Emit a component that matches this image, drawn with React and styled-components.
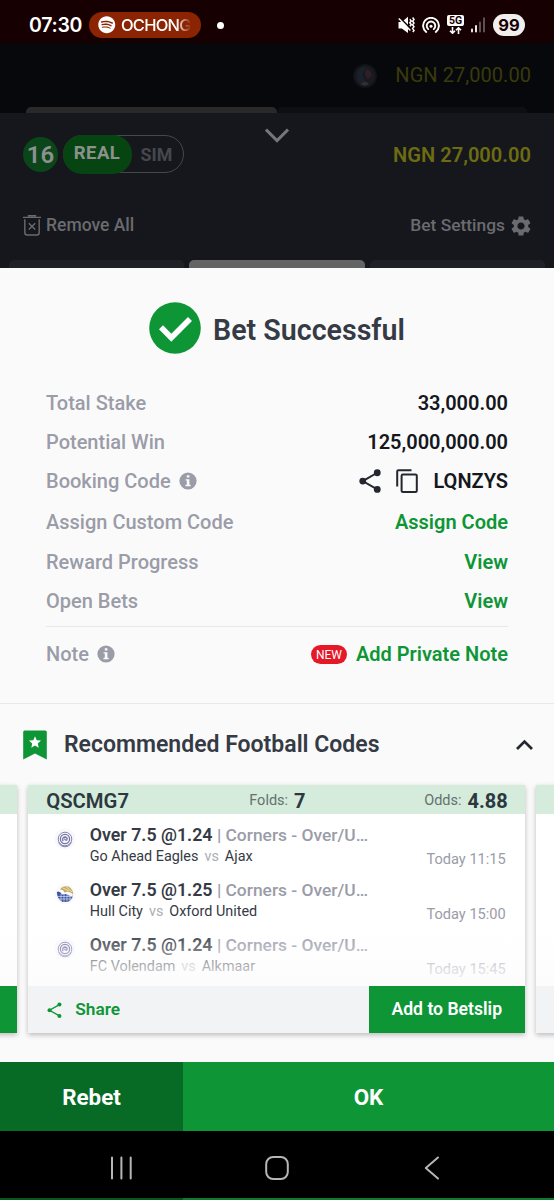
import React from "react";
import styled, { createGlobalStyle } from "styled-components";
import { FaSpotify } from "react-icons/fa";
import { MdSettings } from "react-icons/md";

const GlobalStyle = createGlobalStyle`
  * { box-sizing: border-box; }
  body { margin: 0; background: #000; font-family: Roboto, "Liberation Sans", sans-serif; }
  svg { display: block; flex: none; }
`;

const GREEN = "#0e9636";

const Screen = styled.main`
  width: 554px;
  height: 1200px;
  overflow: hidden;
  display: flex;
  flex-direction: column;
  background: #07080b;
`;

const Text = styled.span`
  display: block;
  white-space: pre;
  font-size: ${(p) => p.$size || 20}px;
  font-weight: ${(p) => p.$weight || 500};
  color: ${(p) => p.$color || "#15171d"};
  letter-spacing: ${(p) => p.$spacing || 0}px;
  line-height: 1.2;
`;

/* Status bar */
const StatusBar = styled.header`
  height: 43px;
  flex: none;
  background: #170001;
  display: flex;
  align-items: center;
  padding: 7px 29px 0 29px;
`;
const Clock = styled(Text)`
  font-family: Inter, Roboto, sans-serif;
  width: 60px;
  padding-top: 2px;
`;
const MediaPill = styled.div`
  display: flex;
  align-items: center;
  gap: 5.5px;
  width: 112px;
  height: 26px;
  padding-left: 9px;
  border-radius: 13px;
  background: #8b2403;
  color: #fff;
`;
const MediaTitle = styled.span`
  width: 73px;
  white-space: nowrap;
  font: 500 16.5px/20px Inter, Roboto, sans-serif;
  letter-spacing: -0.8px;
  mask-image: linear-gradient(to right, #000 76%, transparent 96%);
`;
const Dot = styled.i`
  width: 7px;
  height: 7px;
  margin-left: 16px;
  border-radius: 50%;
  background: #fff;
`;
const StatusIcons = styled.div`
  margin-left: auto;
  display: flex;
  align-items: center;
  gap: 7px;
`;
const Battery = styled.span`
  width: 32px;
  height: 22px;
  margin-left: 1px;
  border-radius: 11px;
  background: #f1eeee;
  color: #170001;
  text-align: center;
  font: 700 16.5px/22px Inter, Roboto, sans-serif;
`;

/* Dimmed page behind the dialog */
const BackPage = styled.section`
  height: 70px;
  flex: none;
  display: flex;
  flex-direction: column;
  justify-content: space-between;
`;
const BackBalance = styled.div`
  display: flex;
  align-items: center;
  justify-content: flex-end;
  gap: 18px;
  height: 64px;
  padding: 1px 23px 0 0;
`;
const BackTabs = styled.div`
  display: flex;
  height: 6px;
  padding: 0 27px 0 26px;
`;
const BackTab = styled.i`
  flex: 1;
  border-radius: 5px 5px 0 0;
  background: ${(p) => (p.$active ? "#29292a" : "#0e0f12")};
`;

const Betslip = styled.section`
  height: 154.5px;
  flex: none;
  display: flex;
  flex-direction: column;
  background: #16171d;
`;
const BetslipTop = styled.div`
  display: grid;
  grid-template-columns: 1fr auto 1fr;
  height: 82px;
  padding: 0 23px;
  align-items: center;
`;
const ModeGroup = styled.div`
  display: flex;
  align-items: center;
  gap: 5px;
`;
const CountBadge = styled.span`
  width: 35px;
  height: 35px;
  border-radius: 50%;
  background: #0a4619;
  color: #8d908f;
  text-align: center;
  font-size: 24px;
  font-weight: 600;
  line-height: 37px;
`;
const Toggle = styled.div`
  display: flex;
  width: 121px;
  height: 38px;
  border: 1.5px solid #46474c;
  border-radius: 19px;
`;
const ToggleOn = styled.span`
  width: 69px;
  margin: -1.5px 0 -1.5px -1.5px;
  border-radius: 19px;
  background: #064511;
  color: #8d918e;
  text-align: center;
  font-size: 18.5px;
  font-weight: 700;
  line-height: 37px;
  letter-spacing: 0.4px;
`;
const ToggleOff = styled.span`
  flex: 1;
  padding-left: 9px;
  color: #46474d;
  font-size: 17.8px;
  font-weight: 700;
  line-height: 38px;
`;
const Balance = styled(Text)`
  padding-top: 3px;
  text-align: right;
`;
const ChevronSlot = styled.div`
  align-self: start;
  padding-top: 15px;
`;
const BetslipActions = styled.div`
  display: flex;
  justify-content: space-between;
  align-items: center;
  height: 61px;
  padding: 0 21px 0 23px;
`;
const IconLabel = styled.div`
  display: flex;
  align-items: center;
  gap: ${(p) => p.$gap}px;
  color: #6a6b6f;
`;
const SlipTabs = styled.div`
  display: flex;
  gap: 5.5px;
  margin-top: auto;
  height: 7.5px;
  padding: 0 8.5px;
`;
const SlipTab = styled.i`
  flex: 1;
  border-radius: 5px 5px 0 0;
  background: ${(p) => (p.$active ? "#646465" : "#202127")};
`;

/* Dialog */
const Dialog = styled.section`
  height: 794px;
  flex: none;
  overflow: hidden;
  display: flex;
  flex-direction: column;
  background: #fafafa;
`;
const DialogTitle = styled.div`
  display: flex;
  align-items: center;
  justify-content: center;
  gap: 12px;
  height: 116px;
  padding-top: 5px;
`;
const Heading = styled(Text)`
  padding-top: 4px;
`;
const Details = styled.div`
  padding: 0 46px;
`;
const DetailRow = styled.div`
  display: flex;
  align-items: center;
  justify-content: space-between;
  height: ${(p) => p.$h}px;
`;
const Inline = styled.div`
  display: flex;
  align-items: center;
  gap: ${(p) => p.$gap}px;
`;
const Rule = styled.hr`
  height: 1.5px;
  margin: ${(p) => p.$top || 0}px 0 0;
  border: 0;
  flex: none;
  background: #e8e8ec;
`;
const NewBadge = styled.span`
  width: 36px;
  height: 19px;
  border-radius: 10px;
  background: #e41827;
  color: #fff;
  text-align: center;
  font-size: 12px;
  line-height: 20px;
`;
const CodesHeader = styled.div`
  display: flex;
  align-items: center;
  height: 81px;
  flex: none;
  padding: 1px 21px 0 23px;
`;
const CodesTitle = styled(Text)`
  flex: 1;
  padding-left: 17px;
`;

/* Carousel */
const Carousel = styled.div`
  display: flex;
  justify-content: center;
  gap: 11.5px;
  padding-right: 1px;
`;
const Card = styled.article`
  display: flex;
  flex-direction: column;
  flex: none;
  width: 496.5px;
  height: 247.5px;
  background: #fff;
  box-shadow: 0 2px 5px rgba(0, 0, 0, 0.25);
`;
const CardHead = styled.div`
  display: grid;
  grid-template-columns: 203px 1fr auto;
  align-items: center;
  height: 28.5px;
  padding: 3px 17px 0 18px;
  background: #d5ebdb;
`;
const CardBody = styled.div`
  position: relative;
  height: 172.5px;
  overflow: hidden;
  padding-top: 10.5px;
`;
const Fade = styled.div`
  position: absolute;
  inset: auto 0 0 0;
  height: 55px;
  background: linear-gradient(to bottom, rgba(253, 253, 253, 0), rgba(252, 252, 252, 0.95));
`;
const Pick = styled.div`
  display: flex;
  height: 55px;
  padding: 0 19px 0 25.5px;
`;
const Crest = styled.div`
  width: 36px;
  padding-top: 3.5px;
`;
const PickInfo = styled.div`
  flex: 1;
`;
const PickLine = styled.div`
  display: flex;
  align-items: center;
  height: 22px;
`;
const Versus = styled(Text)`
  padding: 0 6px;
`;
const PickTime = styled(Text)`
  margin-top: 27px;
`;
const CardFoot = styled.div`
  display: flex;
  height: 46.5px;
  background: #f1f3f4;
`;
const ShareAction = styled.div`
  flex: 1;
  display: flex;
  align-items: center;
  gap: 13px;
  padding: 1px 0 0 19px;
`;
const AddButton = styled.div`
  display: flex;
  align-items: center;
  justify-content: center;
  width: 156px;
  padding-top: 1px;
  background: ${GREEN};
`;

/* Bottom bars */
const Actions = styled.footer`
  display: flex;
  height: 69.5px;
  flex: none;
`;
const ActionButton = styled.div`
  display: flex;
  align-items: center;
  justify-content: center;
  padding-top: 3px;
  width: ${(p) => p.$w}px;
  background: ${(p) => p.$bg};
`;
const NavBar = styled.nav`
  display: flex;
  align-items: center;
  justify-content: space-between;
  height: 67px;
  flex: none;
  padding: 6px 114px 0 110px;
  background: #000;
`;
const Strip = styled.div`
  display: flex;
  flex: 1;
  background: linear-gradient(to right, #07561c 183px, #0f7a2e 183px);
`;

const MuteVibrate = () => (
  <svg width="17" height="18" viewBox="0 0 17 18" fill="none" stroke="#fff">
    <path d="M0.5 6H3.8L10 0.8V17L3.8 12.5H0.5Z" fill="#fff" stroke="none" />
    <path d="M0.7 0.6L13 13.2" stroke="#170001" strokeWidth="1.8" />
    <path d="M0.8 2.4L12.4 14.4" strokeWidth="1.5" />
    <path d="M11.8 3.2L13.3 5L11.8 6.8L13.3 8.6L11.9 10.3M14.6 1.5L16 3.4L14.6 5.2L16 7L14.6 8.9L16 10.7L14.6 12.6L16 14.4L14.8 16" strokeWidth="1.5" />
  </svg>
);
const Hotspot = () => (
  <svg width="18" height="17" viewBox="0 0 18 17" fill="none" stroke="#fff" strokeWidth="1.9" strokeLinecap="round">
    <path d="M4.2 15A7.9 7.9 0 1 1 13.8 15" />
    <path d="M6.2 12.1A4.3 4.3 0 1 1 11.8 12.1" />
    <circle cx="9" cy="9.2" r="1.5" fill="#fff" stroke="none" />
  </svg>
);
const FiveGBox = styled.span`
  display: flex;
  flex-direction: column;
  align-items: center;
  gap: 1px;
  width: 17px;
  padding-bottom: 1px;
`;
const FiveGLabel = styled.b`
  width: 17px;
  height: 11px;
  border-radius: 2px;
  background: #fff;
  color: #170001;
  text-align: center;
  font: 700 10.5px/11px Roboto, sans-serif;
`;
const FiveG = () => (
  <FiveGBox>
    <FiveGLabel>5G</FiveGLabel>
    <svg width="13" height="7" viewBox="0 0 13 7" fill="none" stroke="#fff" strokeWidth="1.6">
      <path d="M3.5 0V6M1 3.7L3.5 6.2L6 3.7M9.5 7V1M7 3.3L9.5 0.8L12 3.3" />
    </svg>
  </FiveGBox>
);
const Signal = () => (
  <svg width="14" height="16" viewBox="0 0 14 16" strokeWidth="1.8" strokeLinecap="round">
    <path d="M1 12.5V14.6M5 9V14.6" stroke="#fff" />
    <path d="M9 5.5V14.6M13 1.2V14.6" stroke="#67595a" />
  </svg>
);
const Avatar = () => (
  <svg width="24" height="24" viewBox="0 0 24 24">
    <circle cx="12" cy="12" r="12" fill="#121318" />
    <circle cx="12" cy="12" r="10.3" fill="#181a20" />
    <path d="M5 8Q8 2 13 3L9 11L12 17L6 19Q3 14 5 8Z" fill="#19212c" />
    <path d="M13 5Q18 6 19 12L14 15L12 10Z" fill="#301f24" />
    <path d="M7 20Q12 15 16 20L12 22Z" fill="#2c2f34" />
  </svg>
);
const ChevronDown = () => (
  <svg width="24" height="16" viewBox="0 0 24 16" fill="none" stroke="#757679" strokeWidth="3">
    <path d="M1 1.6L12 12.6L23 1.6" />
  </svg>
);
const Trash = () => (
  <svg width="18" height="21" viewBox="0 0 18 21" fill="none" stroke="#6a6b6f" strokeWidth="1.4">
    <path d="M0 2.4H18M4.8 0.8H13.2" />
    <path d="M1.8 4.2V17.5Q1.8 20 4.3 20H13.7Q16.2 20 16.2 17.5V4.2" />
    <path d="M5.8 8.2L12.2 14.6M12.2 8.2L5.8 14.6" />
  </svg>
);
const Check = () => (
  <svg width="52" height="52" viewBox="0 0 52 52">
    <circle cx="26" cy="26" r="25.8" fill={GREEN} />
    <path d="M12 25.2L22.3 35.8L41 17" fill="none" stroke="#fff" strokeWidth="5.6" />
  </svg>
);
const Info = () => (
  <svg width="18" height="18" viewBox="0 0 18 18">
    <circle cx="9" cy="9" r="8.6" fill="#9a9ca8" />
    <path d="M7.8 3.2H10.4V5.6H7.8ZM6.6 7.2H10.4V12.8H11.6V14.2H6.5V12.8H7.8V8.6H6.6Z" fill="#fafafa" />
  </svg>
);
const Share = ({ size, color, dot = 3.1, line = 1.8 }) => (
  <svg width={size} height={size * 1.1} viewBox="0 0 20 22" fill={color} stroke={color}>
    <path d="M16.6 3.4L3.4 11L16.6 18.6" fill="none" strokeWidth={line} />
    <g stroke="none">
      <circle cx="16.6" cy="3.4" r={dot} />
      <circle cx="3.4" cy="11" r={dot} />
      <circle cx="16.6" cy="18.6" r={dot} />
    </g>
  </svg>
);
const Copy = () => (
  <svg width="22" height="24" viewBox="0 0 22 24" fill="none" stroke="#24272f" strokeWidth="2">
    <path d="M1.2 17.5V2.4Q1.2 1.2 2.4 1.2H15.5" />
    <rect x="5.6" y="5.4" width="15.2" height="17.6" rx="1.3" />
  </svg>
);
const Bookmark = () => (
  <svg width="24" height="30" viewBox="0 0 24 30">
    <path d="M1.5 0.5H22.3Q23.8 0.5 23.8 2V29.5L12 23.6L0.2 29.5V2Q0.2 0.5 1.5 0.5Z" fill={GREEN} />
    <path d="M12 6.2L13.7 10.2L18 10.6L14.8 13.5L15.7 17.8L12 15.5L8.3 17.8L9.2 13.5L6 10.6L10.3 10.2Z" fill="#fff" />
  </svg>
);
const ChevronUp = () => (
  <svg width="17" height="12" viewBox="0 0 17 12" fill="none" stroke="#24272f" strokeWidth="2.8">
    <path d="M1 10L8.5 2.6L16 10" />
  </svg>
);
const RingCrest = () => (
  <svg width="22" height="22" viewBox="0 0 22 22" fill="none" stroke="#7774a5">
    <circle cx="11" cy="11" r="10.5" fill="#f8f8fc" stroke="none" />
    <circle cx="11" cy="11" r="6.8" strokeWidth="0.9" />
    <circle cx="11" cy="11" r="4.6" strokeWidth="1.3" />
    <path d="M9 13.3Q7.8 9.5 11 9Q14 9.3 12.8 12Q10.2 12.5 11 10.5" strokeWidth="1.3" />
    <path d="M4.5 14.5Q7 19.3 11 18.8Q15 19.3 17.5 14.5" strokeWidth="0.9" />
  </svg>
);
const GlobeCrest = () => (
  <svg width="22" height="22" viewBox="0 0 22 22">
    <circle cx="11" cy="11" r="10.5" fill="#fafafd" />
    <path d="M6 6.5Q9 2.2 14.5 3.6Q19.2 6.5 19.2 11.5Q15 7.2 10.5 9.5Q9.5 6.5 6 6.5Z" fill="#c7ac62" />
    <path d="M9 5L15 8M12 3.5L18 9" stroke="#f4ead0" strokeWidth="0.8" />
    <path d="M2.8 9Q5.6 7.4 8 11.5L12.5 11Q15.5 14 19 12.5Q18 17.2 13.5 19H8.5Q3 16 2.8 9Z" fill="#4059a4" />
    <path d="M7 11V18M10 11V19M13 11V19M16 12V18M4 13.5H19M5 16H18" stroke="#e5eaf7" strokeWidth="0.6" />
  </svg>
);
const Recents = () => (
  <svg width="23" height="24" viewBox="0 0 23 24" stroke="#b6b6b6" strokeWidth="2" strokeLinecap="round">
    <path d="M2 1.5V22.5M11.4 1.5V22.5M20.7 1.5V22.5" />
  </svg>
);
const HomeShape = styled.svg`
  margin-left: -3px;
`;
const Home = () => (
  <HomeShape width="24" height="24" viewBox="0 0 24 24" fill="none" stroke="#b6b6b6" strokeWidth="2">
    <rect x="1.2" y="1" width="21.6" height="22" rx="7" />
  </HomeShape>
);
const Back = () => (
  <svg width="16" height="24" viewBox="0 0 16 24" fill="none" stroke="#b6b6b6" strokeWidth="2" strokeLinecap="round" strokeLinejoin="round">
    <path d="M14 1.5L1.8 12L14 22.5" />
  </svg>
);

const GRAY = "#9a9ca8";
const INK = "#353a45";

const details = [
  { label: "Total Stake", value: "33,000.00", h: 39 },
  { label: "Potential Win", value: "125,000,000.00", h: 39 },
  { label: "Booking Code", value: "LQNZYS", h: 39, info: true, icons: true },
  { label: "Assign Custom Code", value: "Assign Code", h: 42, link: true },
  { label: "Reward Progress", value: "View", h: 39, link: true },
  { label: "Open Bets", value: "View", h: 39, link: true },
];

const picks = [
  { odds: "1.24", home: "Go Ahead Eagles", away: "Ajax", time: "11:15", Logo: RingCrest },
  { odds: "1.25", home: "Hull City", away: "Oxford United", time: "15:00", Logo: GlobeCrest },
  { odds: "1.24", home: "FC Volendam", away: "Alkmaar", time: "15:45", Logo: RingCrest },
];

const CodeCard = () => (
  <Card>
    <CardHead>
      <Text $color="#2b3840" $size={20.3} $weight={600}>QSCMG7</Text>
      <Inline $gap={6}>
        <Text $size={14.5} $weight={400} $color="#64716f">Folds:</Text>
        <Text $weight={700} $color="#2b3840">7</Text>
      </Inline>
      <Inline $gap={6}>
        <Text $size={14.5} $weight={400} $color="#64716f">Odds:</Text>
        <Text $weight={700} $color="#2b3840">4.88</Text>
      </Inline>
    </CardHead>
    <CardBody>
      {picks.map(({ Logo, ...p }) => (
        <Pick key={p.home}>
          <Crest><Logo /></Crest>
          <PickInfo>
            <PickLine>
              <Text $size={17.8} $color={INK} $weight={600}>{`Over 7.5 @${p.odds} `}</Text>
              <Text $size={17.4} $color={GRAY}>| Corners - Over/U…</Text>
            </PickLine>
            <PickLine>
              <Text $size={14.4} $weight={400} $color={INK}>{p.home}</Text>
              <Versus $size={14.4} $weight={400} $color="#abadb5">vs</Versus>
              <Text $size={14.4} $weight={400} $color={INK}>{p.away}</Text>
            </PickLine>
          </PickInfo>
          <PickTime $size={14.6} $weight={400} $color={GRAY}>Today {p.time}</PickTime>
        </Pick>
      ))}
      <Fade />
    </CardBody>
    <CardFoot>
      <ShareAction>
        <Share size={15} color={GREEN} dot={2.7} line={1.8} />
        <Text $size={17.3} $weight={600} $color={GREEN}>Share</Text>
      </ShareAction>
      <AddButton><Text $size={17.6} $weight={600} $color="#fff">Add to Betslip</Text></AddButton>
    </CardFoot>
  </Card>
);

const BlankCard = () => (
  <Card>
    <CardHead />
    <CardBody><Fade /></CardBody>
    <CardFoot><ShareAction /><AddButton /></CardFoot>
  </Card>
);

export default function App() {
  return (
    <Screen>
      <GlobalStyle />
      <StatusBar>
        <Clock $size={19.5} $weight={600} $color="#fff" $spacing={-0.3}>07:30</Clock>
        <MediaPill>
          <FaSpotify size={17.5} />
          <MediaTitle>OCHONG</MediaTitle>
        </MediaPill>
        <Dot />
        <StatusIcons>
          <MuteVibrate />
          <Hotspot />
          <FiveG />
          <Signal />
          <Battery>99</Battery>
        </StatusIcons>
      </StatusBar>

      <BackPage>
        <BackBalance>
          <Avatar />
          <Text $size={20.1} $weight={400} $color="#393b0b">NGN 27,000.00</Text>
        </BackBalance>
        <BackTabs><BackTab $active /><BackTab /></BackTabs>
      </BackPage>

      <Betslip>
        <BetslipTop>
          <ModeGroup>
            <CountBadge>16</CountBadge>
            <Toggle><ToggleOn>REAL</ToggleOn><ToggleOff>SIM</ToggleOff></Toggle>
          </ModeGroup>
          <ChevronSlot><ChevronDown /></ChevronSlot>
          <Balance $size={20.1} $color="#6c6c10" $weight={600}>NGN 27,000.00</Balance>
        </BetslipTop>
        <BetslipActions>
          <IconLabel $gap={5}><Trash /><Text $size={17.5} $color="#6a6b6f">Remove All</Text></IconLabel>
          <IconLabel $gap={4}><Text $size={17.4} $color="#6a6b6f">Bet Settings</Text><MdSettings size={24} /></IconLabel>
        </BetslipActions>
        <SlipTabs><SlipTab /><SlipTab $active /><SlipTab /></SlipTabs>
      </Betslip>

      <Dialog>
        <DialogTitle>
          <Check />
          <Heading $size={28.6} $weight={600} $color={INK}>Bet Successful</Heading>
        </DialogTitle>
        <Details>
          {details.map((d) => (
            <DetailRow key={d.label} $h={d.h}>
              <Inline $gap={8}>
                <Text $color={GRAY}>{d.label}</Text>
                {d.info && <Info />}
              </Inline>
              <Inline $gap={15}>
                {d.icons && <Share size={22} color="#24272f" />}
                {d.icons && <Copy />}
                <Text $weight={600} $color={d.link ? GREEN : "#15171d"}>{d.value}</Text>
              </Inline>
            </DetailRow>
          ))}
          <Rule $top={5} />
          <DetailRow $h={54}>
            <Inline $gap={8}><Text $color={GRAY}>Note</Text><Info /></Inline>
            <Inline $gap={9}>
              <NewBadge>NEW</NewBadge>
              <Text $weight={600} $color={GREEN}>Add Private Note</Text>
            </Inline>
          </DetailRow>
        </Details>
        <Rule $top={21.5} />
        <CodesHeader>
          <Bookmark />
          <CodesTitle $size={23} $weight={600} $color={INK}>Recommended Football Codes</CodesTitle>
          <ChevronUp />
        </CodesHeader>
        <Carousel>
          <BlankCard />
          <CodeCard />
          <BlankCard />
        </Carousel>
      </Dialog>

      <Actions>
        <ActionButton $w={183} $bg="#086b25"><Text $size={22.4} $weight={700} $color="#fff">Rebet</Text></ActionButton>
        <ActionButton $w={371} $bg={GREEN}><Text $size={22.4} $weight={700} $color="#fff">OK</Text></ActionButton>
      </Actions>
      <NavBar><Recents /><Home /><Back /></NavBar>
      <Strip />
    </Screen>
  );
}
